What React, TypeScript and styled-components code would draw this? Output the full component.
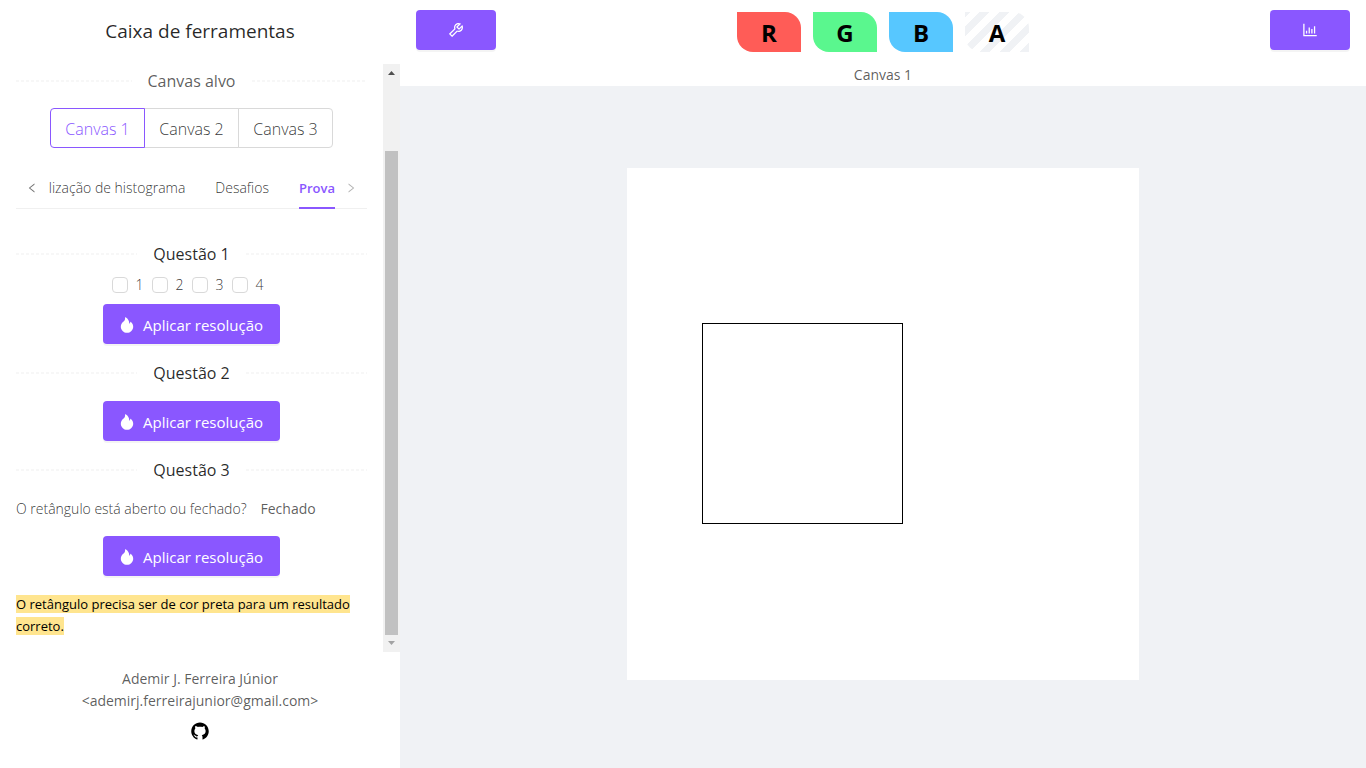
import React, { useState } from 'react';
import styled, { createGlobalStyle } from 'styled-components';
import {
  AiFillFire,
  AiFillGithub,
  AiOutlineBarChart,
  AiOutlineLeft,
  AiOutlineRight,
  AiOutlineTool,
} from 'react-icons/ai';

const purple = '#8a57ff';
const heading = 'rgba(0, 0, 0, 0.85)';
const muted = 'rgba(0, 0, 0, 0.65)';
const thin = 'rgba(0, 0, 0, 0.8)';

const GlobalStyle = createGlobalStyle`
  *, *::before, *::after { box-sizing: border-box; }
  body {
    margin: 0;
    background: #fff;
    color: ${muted};
    font: 400 14px/22px 'Segoe UI', 'Open Sans', 'Noto Sans', sans-serif;
  }
  button, input { font: inherit; }
  h1, h2, h3, p { margin: 0; }
`;

const Page = styled.div`
  display: flex;
  min-height: 100vh;
`;

const Sidebar = styled.aside`
  display: flex;
  flex-direction: column;
  flex: 0 0 400px;
  min-width: 0;
`;

const Title = styled.h1`
  height: 64px;
  color: ${heading};
  font-size: 19px;
  font-weight: 500;
  line-height: 62px;
  text-align: center;
`;

const ScrollArea = styled.div`
  display: flex;
  flex: 1;
`;

const Tools = styled.div`
  display: flex;
  flex: 1;
  flex-direction: column;
  align-items: center;
  min-width: 0;
  padding: 5px 16px 12px;
`;

const ScrollTrack = styled.div`
  display: flex;
  flex-direction: column;
  align-items: center;
  width: 17px;
  background: #f1f1f1;
`;

const ScrollArrow = styled.svg<{ $color: string }>`
  display: block;
  width: 17px;
  height: 17px;
  fill: ${(p) => p.$color};
`;

const ScrollRest = styled.div`
  flex: 70;
`;

const ScrollThumb = styled.div`
  flex: 484;
  width: 13px;
  background: #c1c1c1;
`;

const DividerRow = styled.h2<{ $strong?: boolean }>`
  display: flex;
  align-items: center;
  gap: 16px;
  width: 100%;
  color: ${(p) => (p.$strong ? heading : muted)};
  font-size: 16px;
  font-weight: 500;
  line-height: 24px;

  &::before, &::after {
    content: '';
    flex: 1;
    height: 2px;
    background: repeating-linear-gradient(90deg, #f7f7f7 0 3px, transparent 3px 5px);
  }
`;

const Segments = styled.div`
  display: flex;
  margin: 15px 0 24px;
`;

const Segment = styled.button<{ $active: boolean }>`
  position: relative;
  z-index: ${(p) => (p.$active ? 1 : 0)};
  width: 95px;
  height: 40px;
  padding: 2px 0 0;
  border: 1px solid ${(p) => (p.$active ? purple : '#d9d9d9')};
  background: #fff;
  color: ${(p) => (p.$active ? purple : thin)};
  font-size: 16px;
  font-weight: 300;

  & + & { margin-left: -1px; }
  &:first-child { border-radius: 4px 0 0 4px; }
  &:last-child { border-radius: 0 4px 4px 0; }
`;

const TabBar = styled.div`
  display: flex;
  align-items: stretch;
  width: 100%;
  height: 37px;
  margin-bottom: 33px;
  border-bottom: 1px solid #f0f0f0;
`;

const TabArrow = styled.button<{ $faded?: boolean }>`
  display: flex;
  flex: 0 0 32px;
  align-items: center;
  justify-content: center;
  height: 32px;
  padding: 0;
  border: 0;
  background: none;
  color: ${(p) => (p.$faded ? 'rgba(0, 0, 0, 0.3)' : 'rgba(0, 0, 0, 0.55)')};
  font-size: 12px;
`;

const TabList = styled.div`
  display: flex;
  flex: 1;
  justify-content: flex-end;
  gap: 30px;
  min-width: 0;
`;

const Tab = styled.button<{ $active: boolean }>`
  height: 37px;
  padding: 0 0 4px;
  border: 0;
  border-bottom: 2px solid ${(p) => (p.$active ? purple : 'transparent')};
  background: none;
  color: ${(p) => (p.$active ? purple : thin)};
  font-size: ${(p) => (p.$active ? 13 : 14)}px;
  font-weight: ${(p) => (p.$active ? 600 : 300)};
  white-space: nowrap;
`;

const Checks = styled.div`
  display: flex;
  gap: 8px;
  margin: 8px 0;
  padding-right: 8px;
`;

const CheckLabel = styled.label`
  display: flex;
  align-items: center;
  gap: 8px;
  color: ${thin};
  font-weight: 300;
`;

const Check = styled.input`
  width: 16px;
  height: 16px;
  margin: 0;
  border: 1px solid #d9d9d9;
  border-radius: 4px;
  background: #fff;
  appearance: none;

  &:checked { background: ${purple}; border-color: ${purple}; }
`;

const PrimaryButton = styled.button`
  display: flex;
  align-items: center;
  justify-content: center;
  height: 40px;
  padding: 0;
  border: 0;
  border-radius: 4px;
  background: ${purple};
  box-shadow: 0 2px 0 rgba(0, 0, 0, 0.045);
  color: #fff;
  font-size: 18px;
`;

const ApplyBox = styled(PrimaryButton)`
  gap: 7px;
  width: 177px;
  margin-bottom: 17px;
  padding: 2px 2px 0 0;
  font-size: 15px;
  svg { font-size: 18px; }
`;

const IconButton = styled(PrimaryButton)`
  width: 80px;
`;

const Spacer = styled.div`
  height: 16px;
`;

const Answer = styled.p`
  display: flex;
  gap: 14px;
  width: 100%;
  margin: 16px 0;
  color: ${thin};
  font-weight: 300;
`;

const Strong = styled.strong`
  color: ${muted};
  font-weight: 500;
`;

const Note = styled.p`
  width: 100%;
  font-size: 13px;
`;

const Highlight = styled.mark`
  background: #ffe58f;
  color: #000;
`;

const Footer = styled.footer`
  display: flex;
  flex-direction: column;
  align-items: center;
  height: 116px;
  padding-top: 16px;
  font-weight: 500;
`;

const GithubLink = styled.a`
  display: flex;
  margin-top: 9px;
  color: #000;
  font-size: 20px;
`;

const Main = styled.main`
  display: flex;
  flex: 1;
  flex-direction: column;
  min-width: 0;
`;

const TopBar = styled.header`
  display: flex;
  align-items: flex-start;
  justify-content: space-between;
  height: 64px;
  padding: 10px 16px;
`;

const Channels = styled.div`
  display: flex;
  gap: 12px;
  padding-top: 2px;
`;

const Channel = styled.button<{ $fill: string }>`
  width: 64px;
  height: 40px;
  padding: 2px 0 0;
  border: 0;
  border-radius: 0 16px;
  background: ${(p) => p.$fill};
  color: #000;
  font-size: 24px;
  font-weight: 700;
`;

const CanvasName = styled.h2`
  height: 22px;
  font-size: 14px;
  font-weight: 500;
  line-height: 22px;
  text-align: center;
`;

const Stage = styled.div`
  display: flex;
  flex: 1;
  align-items: center;
  justify-content: center;
  padding-bottom: 6px;
  background: #f0f2f5;
`;

const Drawing = styled.svg`
  width: 512px;
  height: 512px;
  background: #fff;
`;

const canvases = ['Canvas 1', 'Canvas 2', 'Canvas 3'];
const tabs = ['lização de histograma', 'Desafios', 'Prova'];
const channels = [
  { name: 'R', fill: '#ff5c57' },
  { name: 'G', fill: '#5af78e' },
  { name: 'B', fill: '#57c7ff' },
  {
    name: 'A',
    fill: 'repeating-linear-gradient(-45deg, #f0f2f5 0 7px, #fff 7px 14px)',
  },
];

function ApplyButton() {
  return (
    <ApplyBox type="button">
      <AiFillFire />
      Aplicar resolução
    </ApplyBox>
  );
}

export default function App() {
  const [canvas, setCanvas] = useState('Canvas 1');
  const [tab, setTab] = useState('Prova');

  return (
    <>
      <GlobalStyle />
      <Page>
        <Sidebar>
          <Title>Caixa de ferramentas</Title>
          <ScrollArea>
            <Tools>
              <DividerRow>Canvas alvo</DividerRow>
              <Segments>
                {canvases.map((name) => (
                  <Segment key={name} type="button" $active={name === canvas} onClick={() => setCanvas(name)}>
                    {name}
                  </Segment>
                ))}
              </Segments>
              <TabBar>
                <TabArrow type="button" aria-label="Anterior"><AiOutlineLeft /></TabArrow>
                <TabList role="tablist">
                  {tabs.map((name) => (
                    <Tab
                      key={name}
                      type="button"
                      role="tab"
                      aria-selected={name === tab}
                      $active={name === tab}
                      onClick={() => setTab(name)}
                    >
                      {name}
                    </Tab>
                  ))}
                </TabList>
                <TabArrow type="button" aria-label="Próximo" $faded><AiOutlineRight /></TabArrow>
              </TabBar>

              <DividerRow $strong>Questão 1</DividerRow>
              <Checks>
                {[1, 2, 3, 4].map((n) => (
                  <CheckLabel key={n}>
                    <Check type="checkbox" />
                    {n}
                  </CheckLabel>
                ))}
              </Checks>
              <ApplyButton />

              <DividerRow $strong>Questão 2</DividerRow>
              <Spacer />
              <ApplyButton />

              <DividerRow $strong>Questão 3</DividerRow>
              <Answer>
                <span>O retângulo está aberto ou fechado?</span>
                <Strong>Fechado</Strong>
              </Answer>
              <ApplyButton />
              <Note>
                <Highlight>O retângulo precisa ser de cor preta para um resultado correto.</Highlight>
              </Note>
            </Tools>
            <ScrollTrack>
              <ScrollArrow $color="#505050" viewBox="0 0 17 17"><path d="M5 11 8.500 7 12 11z" /></ScrollArrow>
              <ScrollRest />
              <ScrollThumb />
              <ScrollArrow $color="#a3a3a3" viewBox="0 0 17 17"><path d="M5 6h7L8.500 10z" /></ScrollArrow>
            </ScrollTrack>
          </ScrollArea>
          <Footer>
            <span>Ademir J. Ferreira Júnior</span>
            <span>&lt;ademirj.ferreirajunior@gmail.com&gt;</span>
            <GithubLink href="#github" aria-label="GitHub"><AiFillGithub /></GithubLink>
          </Footer>
        </Sidebar>

        <Main>
          <TopBar>
            <IconButton type="button" aria-label="Ferramentas"><AiOutlineTool /></IconButton>
            <Channels>
              {channels.map((c) => (
                <Channel key={c.name} type="button" $fill={c.fill}>{c.name}</Channel>
              ))}
            </Channels>
            <IconButton type="button" aria-label="Histograma"><AiOutlineBarChart /></IconButton>
          </TopBar>
          <CanvasName>{canvas}</CanvasName>
          <Stage>
            <Drawing viewBox="0 0 512 512">
              <rect x="75.500" y="155.500" width="200" height="200" fill="none" stroke="#000" />
            </Drawing>
          </Stage>
        </Main>
      </Page>
    </>
  );
}
